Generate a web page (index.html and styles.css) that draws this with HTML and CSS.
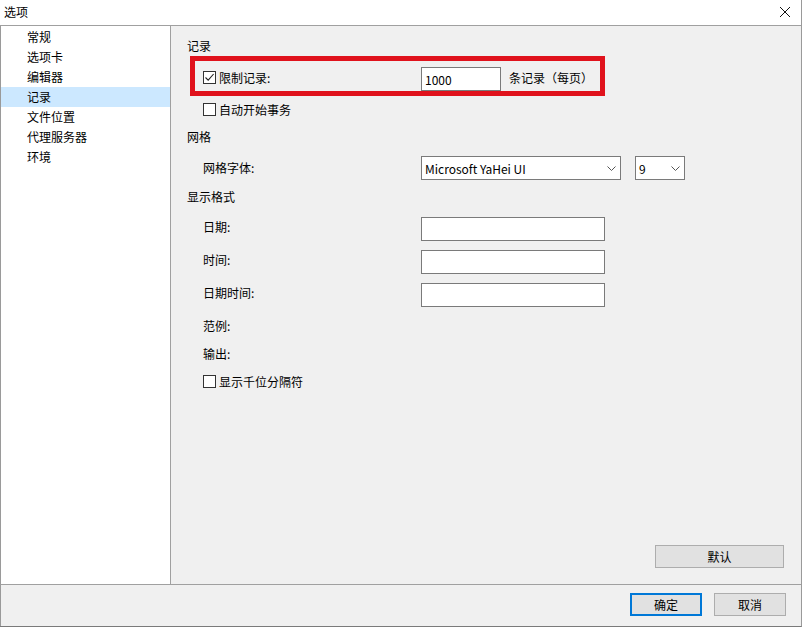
FILE: index.html
```html
<!DOCTYPE html>
<html lang="zh-CN">
<head>
    <meta charset="UTF-8">
    <title>选项</title>
    <link rel="stylesheet" href="styles.css">
</head>
<body>
    <div class="window">
        <div class="titlebar">
            <span class="title">选项</span>
            <svg class="close" width="12" height="12" viewBox="0 0 12 12">
                <path d="M1 1 L11 11 M11 1 L1 11" stroke="#111" stroke-width="1" fill="none"/>
            </svg>
        </div>

        <div class="content">
            <ul class="sidebar">
                <li>常规</li>
                <li>选项卡</li>
                <li>编辑器</li>
                <li class="active">记录</li>
                <li>文件位置</li>
                <li>代理服务器</li>
                <li>环境</li>
            </ul>

            <div class="panel">
                <div class="heading">记录</div>

                <div class="row row-limit">
                    <div class="label">
                        <span class="check checked">
                            <svg width="11" height="11" viewBox="0 0 11 11"><path d="M1.5 5.5 L4.2 8.2 L9.6 2" stroke="#222" stroke-width="1.1" fill="none"/></svg>
                        </span>
                        限制记录:
                    </div>
                    <div class="field small">1000</div>
                    <span class="suffix">条记录（每页）</span>
                    <div class="highlight"></div>
                </div>

                <div class="row line">
                    <div class="label"><span class="check"></span>自动开始事务</div>
                </div>

                <div class="heading gap">网格</div>

                <div class="row row-font">
                    <div class="label">网格字体:</div>
                    <div class="field select wide">
                        Microsoft YaHei UI
                        <svg class="chev" width="9" height="6" viewBox="0 0 9 6"><path d="M0.5 0.5 L4.5 4.5 L8.5 0.5" stroke="#555" fill="none"/></svg>
                    </div>
                    <div class="field select size">
                        9
                        <svg class="chev" width="9" height="6" viewBox="0 0 9 6"><path d="M0.5 0.5 L4.5 4.5 L8.5 0.5" stroke="#555" fill="none"/></svg>
                    </div>
                </div>

                <div class="heading gap-sm">显示格式</div>

                <div class="row row-input first">
                    <div class="label">日期:</div>
                    <div class="field medium"></div>
                </div>
                <div class="row row-input">
                    <div class="label">时间:</div>
                    <div class="field medium"></div>
                </div>
                <div class="row row-input">
                    <div class="label">日期时间:</div>
                    <div class="field medium"></div>
                </div>

                <div class="row line">
                    <div class="label">范例:</div>
                </div>
                <div class="row line">
                    <div class="label">输出:</div>
                </div>
                <div class="row line">
                    <div class="label"><span class="check"></span>显示千位分隔符</div>
                </div>

                <div class="panel-footer">
                    <button type="button" class="btn btn-default">默认</button>
                </div>
            </div>
        </div>

        <div class="footer">
            <button type="button" class="btn primary">确定</button>
            <button type="button" class="btn">取消</button>
        </div>
    </div>
</body>
</html>
```

FILE: styles.css
```css
* {
    box-sizing: border-box;
}
body {
    margin: 0;
    font-family: "Noto Sans CJK SC", "Noto Sans", sans-serif;
    font-size: 12px;
    color: #000;
    background: #f0f0f0;
}
.window {
    width: 802px;
    height: 627px;
    display: flex;
    flex-direction: column;
    border-right: 1px solid #9a9a9a;
    border-bottom: 1px solid #7a7a7a;
}
.titlebar {
    height: 26px;
    background: #fff;
    border-bottom: 1px solid #a0a0a0;
    display: flex;
    align-items: center;
    justify-content: space-between;
    padding: 0 10px 2px 4px;
    font-size: 12px;
}
.content {
    display: flex;
    height: 559px;
    border-left: 1px solid #9a9a9a;
    border-bottom: 1px solid #a0a0a0;
}
.sidebar {
    list-style: none;
    margin: 0;
    padding: 0;
    width: 170px;
    background: #fff;
    border-right: 1px solid #a0a0a0;
}
.sidebar li {
    height: 20px;
    line-height: 20px;
    padding-left: 26px;
}
.sidebar li:first-child {
    margin-top: 1px;
}
.sidebar li.active {
    background: #cce8ff;
}
.panel {
    flex: 1;
    display: flex;
    flex-direction: column;
    padding: 10px 0 0 16px;
}
.heading {
    height: 20px;
    line-height: 20px;
}
.panel > .heading:first-child {
    margin-bottom: 1px;
}
.heading.gap {
    margin-top: 8px;
}
.heading.gap-sm {
    margin-top: 7px;
}
.row {
    display: flex;
    align-items: center;
    padding-left: 16px;
    position: relative;
}
.row .label {
    width: 218px;
    display: flex;
    align-items: center;
    flex-shrink: 0;
}
.row.line {
    height: 20px;
    margin-top: 8px;
}
.row-limit {
    height: 24px;
    margin-top: 10px;
}
.row-limit .label {
    margin-top: -4px;
}
.row-font {
    height: 24px;
    margin-top: 9px;
}
.row-font .label {
    margin-top: -2px;
}
.row-input {
    height: 24px;
    margin-top: 9px;
}
.row-input.first {
    margin-top: 10px;
}
.row-input .label {
    margin-top: -6px;
}
.check {
    width: 13px;
    height: 13px;
    background: #fff;
    border: 1px solid #333;
    margin-right: 3px;
    display: inline-flex;
    align-items: center;
    justify-content: center;
}
.field {
    height: 24px;
    background: #fff;
    border: 1px solid #7a7a7a;
    padding-left: 3px;
    display: flex;
    align-items: center;
}
.field.small {
    width: 80px;
}
.field.medium {
    width: 184px;
}
.field.wide {
    width: 200px;
}
.field.size {
    width: 50px;
    margin-left: 14px;
}
.select {
    justify-content: space-between;
    padding-right: 4px;
}
.chev {
    margin-top: 1px;
}
.suffix {
    margin-left: 8px;
    margin-top: -4px;
}
.highlight {
    position: absolute;
    left: 3px;
    top: -11px;
    width: 415px;
    height: 40px;
    border: 5px solid #e0121c;
    pointer-events: none;
}
.panel-footer {
    margin-top: auto;
    display: flex;
    justify-content: flex-end;
    padding: 0 17px 16px 0;
}
.btn {
    font-family: inherit;
    font-size: 12px;
    color: #000;
    background: #e1e1e1;
    border: 1px solid #adadad;
    height: 23px;
    width: 72px;
    padding: 0;
}
.btn-default {
    width: 129px;
}
.btn.primary {
    border: 2px solid #0078d7;
}
.footer {
    height: 41px;
    display: flex;
    justify-content: flex-end;
    align-items: flex-start;
    gap: 12px;
    padding: 8px 15px 0 0;
    border-left: 1px solid #9a9a9a;
}
```
